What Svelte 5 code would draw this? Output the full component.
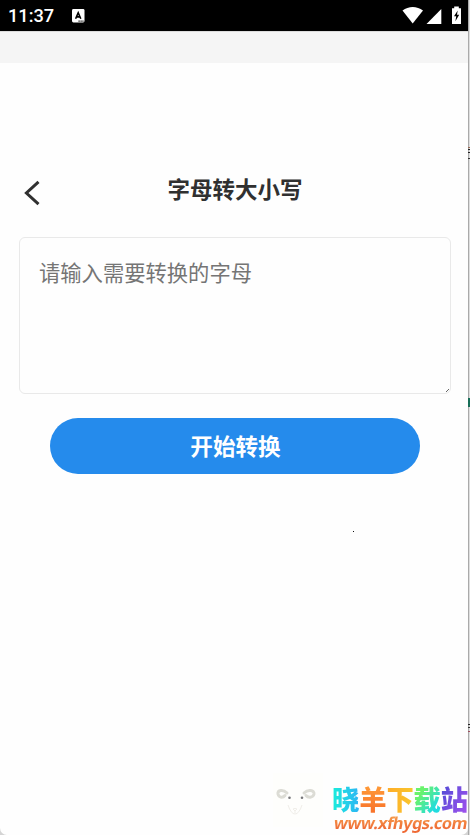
<script lang="ts">
    let text = "";

    const marks = [
        { y: 147, color: "#9a6a55", h: 1 },
        { y: 149, color: "#222222", h: 1 },
        { y: 152, color: "#222222", h: 1 },
        { y: 158, color: "#333333", h: 1 },
        { y: 398, color: "#176e58", h: 9 },
        { y: 724, color: "#222222", h: 1 },
        { y: 727, color: "#333333", h: 1 },
        { y: 731, color: "#a05060", h: 1 },
    ];

    const brand = [
        { char: "晓", tone: "cyan" },
        { char: "羊", tone: "orange" },
        { char: "下", tone: "yellow" },
        { char: "载", tone: "green" },
        { char: "站", tone: "purple" },
    ];

    function convert() {
        text = text === text.toUpperCase() ? text.toLowerCase() : text.toUpperCase();
    }
</script>

<div class="window">
    <div class="screen">
        <div class="status">
            <span class="time">11:37</span>
            <svg class="app-icon" width="13" height="14" viewBox="0 0 13 14">
                <rect width="12.5" height="13.5" rx="1.4" fill="#fff"/>
                <path d="M3.6 9.8 6.2 3.8 8.8 9.8M4.6 7.9h3.2" fill="none" stroke="#000" stroke-width="1.6"/>
                <path d="M6.5 12.1h1.2M8.5 12.1h1.2M10.4 12.1h1.1" stroke="#000" stroke-width="1.1"/>
            </svg>
            <svg class="system" width="60" height="20" viewBox="0 0 60 20" fill="#fff">
                <path d="M0.5 5.5C6.5 0.8 15 0.8 21 5.5L10.7 18.5Z"/>
                <path d="M39.3 4v15H24.5Z"/>
                <path d="M50 3.3h2.2V1.5h4.6v1.8H59V19h-9Z"/>
                <path d="M55.7 5.5 52 11.2h2.2L53.4 16.2 57.2 9.7H55Z" fill="#000"/>
            </svg>
        </div>
        <div class="strip"></div>

        <header class="header">
            <svg class="back" width="18" height="26" viewBox="0 0 18 26">
                <path d="M15.5 1.8 3.4 13 15.5 24.2" fill="none" stroke="#303030" stroke-width="3"/>
            </svg>
            <h1>字母转大小写</h1>
        </header>

        <div class="field">
            <textarea bind:value={text} placeholder="请输入需要转换的字母"></textarea>
            <svg class="grip" width="3" height="3" viewBox="0 0 3 3">
                <path d="M0 3 3 0" stroke="#666" stroke-width="1"/>
            </svg>
        </div>

        <button class="submit" on:click={convert}>开始转换</button>

        <div class="speck"></div>
    </div>

    <div class="edge">
        {#each marks as mark}
            <i style={`top: ${mark.y}px; height: ${mark.h}px; background: ${mark.color};`}></i>
        {/each}
    </div>

    <div class="watermark">
        <svg class="sheep" width="50" height="54" viewBox="0 0 50 54">
            <rect width="50" height="54" fill="#fefefc"/>
            <g fill="none" stroke="#dcdcd5" stroke-width="3" stroke-linecap="round">
                <path d="M14 20C10 16 4.5 17 5 21C6 25 10 25 12 22.5"/>
                <path d="M31 20C35 16 41.5 17 41 21C40 25 35 25 33 22.5"/>
            </g>
            <circle cx="16.5" cy="24.8" r="1.3" fill="#77777a"/>
            <circle cx="29" cy="24.8" r="1.3" fill="#77777a"/>
            <path d="M15 32Q18 41 22 41Q26 41 29 32M20 36q2-1.2 4 0l-2 2zM22 38v2" fill="none" stroke="#f0eee9" stroke-width="1"/>
        </svg>
        <div class="brand">
            <div class="name">
                {#each brand as item}
                    <span class={item.tone}>{item.char}</span>
                {/each}
            </div>
            <div class="url">www.xfhygs.com</div>
        </div>
    </div>
</div>

<style>
    :global(body){
        background: #fff;
    }

    .window{
        width: 470px;
        height: 835px;

        position: relative;
        display: flex;
        overflow: hidden;

        background: #d4d4d4;

        font-family: Roboto, "Noto Sans CJK SC", sans-serif;
    }

    .screen{
        width: 468px;
        height: 835px;

        position: relative;
        display: flex;
        flex-direction: column;

        border-radius: 0 0 7px 7px;

        background: #fefefe;
    }

    .status{
        height: 31px;

        display: flex;
        align-items: center;

        box-sizing: border-box;
        padding: 1px 6px 0 8px;

        background: #000;
        color: #fff;
    }

    .time{
        width: 64px;

        font-size: 18.2px;
        font-weight: 500;
        line-height: 30px;
    }

    .system{
        margin-left: auto;
        margin-bottom: 3px;
    }

    .app-icon{
        margin-bottom: 1px;
    }

    .strip{
        height: 32px;

        box-sizing: border-box;
        border-top: 1px solid #dcdcdc;

        background: #f5f5f5;
    }

    .header{
        height: 40px;

        display: grid;
        grid-template-columns: 44px 1fr 44px;

        margin-top: 107px;
    }

    .back{
        margin: 10px 0 0 23px;
    }

    h1{
        margin: 0;
        padding-left: 2px;

        color: #303030;
        font-size: 22.5px;
        line-height: 40px;
        font-weight: bold;
        text-align: center;
    }

    .field{
        width: 432px;
        height: 157px;

        position: relative;

        margin: 27px 0 0 19px;
    }

    textarea{
        width: 100%;
        height: 100%;

        display: block;
        box-sizing: border-box;
        padding: 20px 19px 18px;

        border: 1px solid #e9e9e9;
        border-radius: 6px;
        outline: none;
        resize: none;

        background: transparent;
        color: #303030;
        font-family: inherit;
        font-size: 21.3px;
        line-height: 32px;
    }

    textarea::placeholder{
        color: #757575;
    }

    .grip{
        position: absolute;
        right: 2px;
        bottom: 2px;
    }

    .submit{
        width: 370px;
        height: 56px;

        margin: 24px 0 0 50px;
        padding: 3px 0 0 1px;

        border: none;
        border-radius: 28px;

        background: #258bec;
        color: #fff;
        font-family: inherit;
        font-size: 22.6px;
        font-weight: bold;
        line-height: 53px;
    }

    .speck{
        width: 1px;
        height: 1px;

        position: absolute;
        top: 531px;
        left: 353px;

        background: #111;
    }

    .edge{
        width: 2px;
        height: 835px;

        position: relative;

        box-sizing: border-box;
        border-left: 1px solid #aaa;

        background: #dedede;
    }

    .edge i{
        width: 2px;

        position: absolute;
        left: -1px;
    }

    .watermark{
        position: absolute;
        left: 273px;
        bottom: 0;

        display: flex;
        align-items: flex-end;
        column-gap: 9px;
    }

    .sheep{
        margin-bottom: 8px;
    }

    .brand{
        width: 138px;

        padding-bottom: 1px;
    }

    .name{
        display: flex;

        font-size: 27.4px;
        font-weight: 900;
        line-height: 32px;
    }

    .name span{
        width: 27.2px;
        flex: none;

        background-clip: text;
        color: transparent;
    }

    .cyan{
        background-image: linear-gradient(90deg, #19eedb, #2cb5f4);
    }

    .orange{
        background-image: linear-gradient(180deg, #ff9b38, #f76b28);
    }

    .yellow{
        background-image: linear-gradient(90deg, #ffab28, #f8c72e);
    }

    .green{
        background-image: linear-gradient(125deg, #6af36b 25%, #20dcdf 75%);
    }

    .purple{
        background-image: linear-gradient(120deg, #4f4bd5, #a652ef);
    }

    .url{
        width: max-content;

        margin: -5px 0 0 2px;

        background: linear-gradient(180deg, #f59a4c 20%, #ef6934 80%);
        background-clip: text;
        color: transparent;
        font-family: "Noto Sans", sans-serif;
        font-size: 16.4px;
        font-weight: bold;
        letter-spacing: -0.45px;
        line-height: 22px;

        transform: skewX(-10deg);
    }
</style>
